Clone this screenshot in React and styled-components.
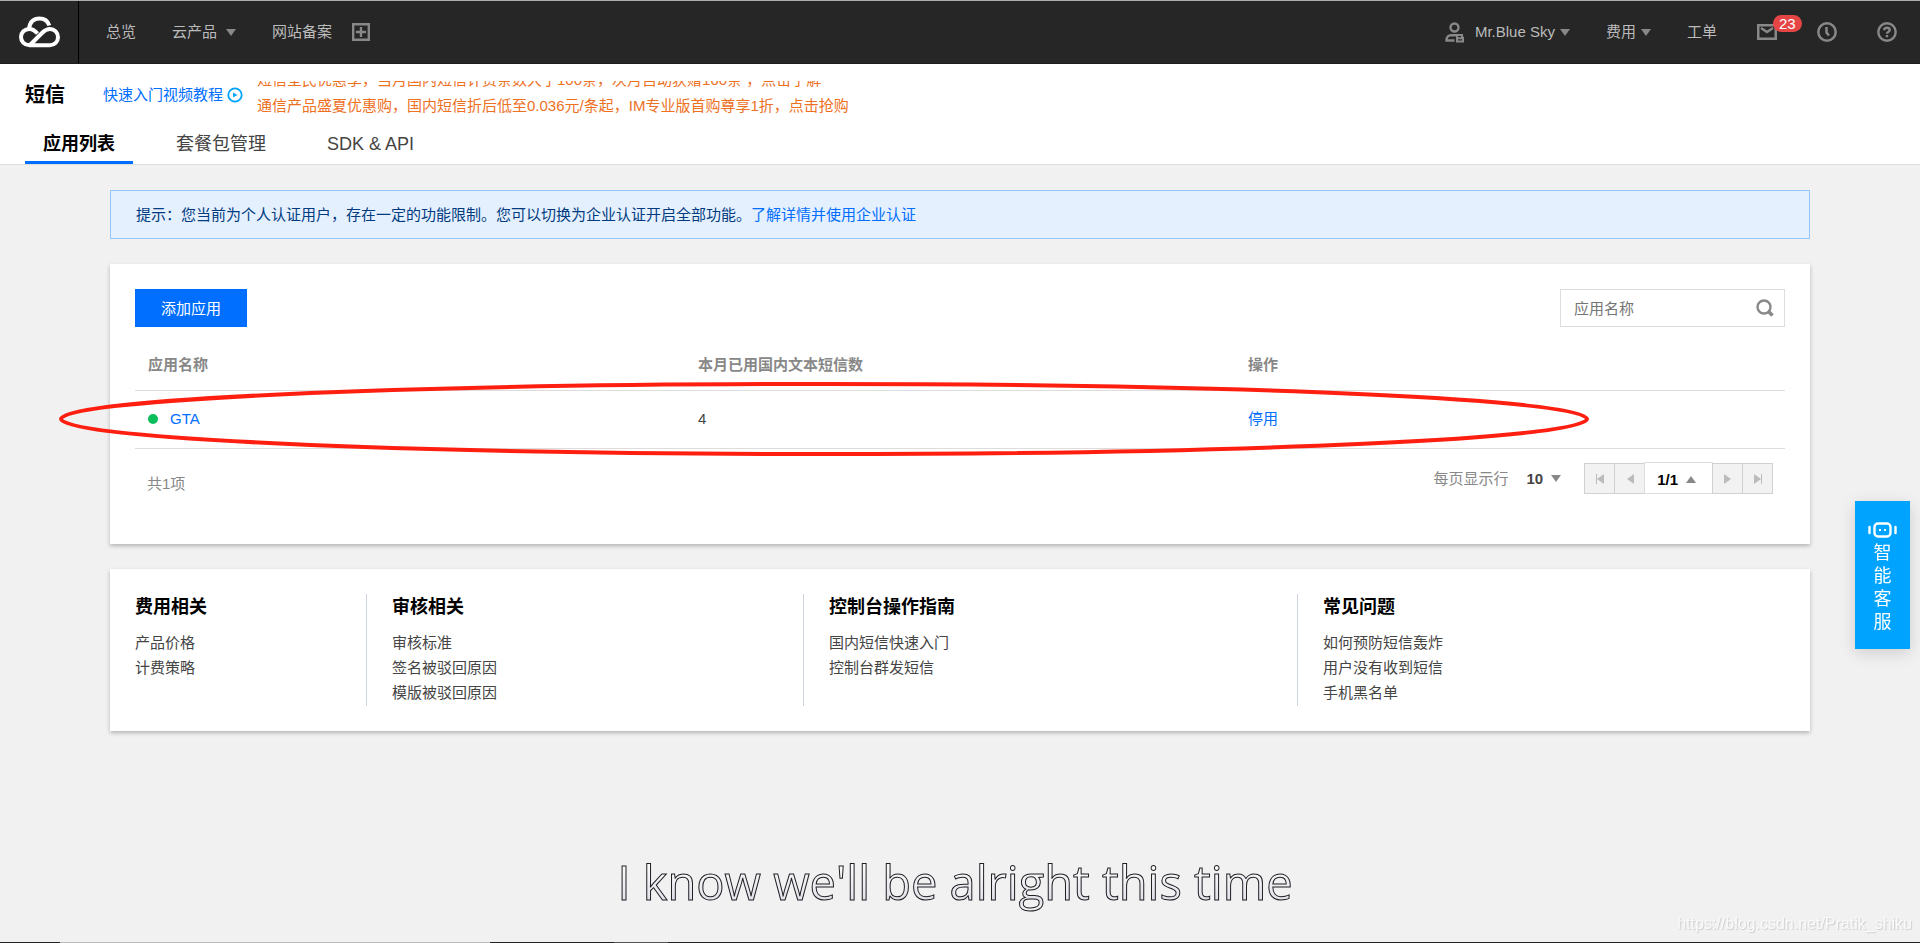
import React, { useState } from "react";
import styled, { createGlobalStyle, css } from "styled-components";

const GlobalStyle = createGlobalStyle`
  * {
    box-sizing: border-box;
  }

  body {
    margin: 0;
    background: #f1f1f1;
    color: #444;
    font-family: "Liberation Sans", "Noto Sans CJK SC", sans-serif;
    font-size: 15px;
    line-height: 24px;
  }

  button, input, select {
    font: inherit;
  }

  a {
    color: #006eff;
    text-decoration: none;
  }
`;

const Page = styled.div`
  min-height: 100vh;
`;

const Header = styled.header`
  display: flex;
  align-items: center;
  height: 64px;
  padding-right: 23px;
  border-top: 1px solid #a9aeae;
  border-bottom: 1px solid #1e1e1e;
  background: #262626;
`;

const Logo = styled.a`
  display: flex;
  align-items: center;
  justify-content: center;
  width: 79px;
  height: 100%;
  border-right: 1px solid #000;
`;

const Nav = styled.nav`
  display: flex;
  align-items: center;
  gap: ${(props) => props.$gap};
  margin-left: ${(props) => props.$push || "0"};
`;

const NavLink = styled.a`
  display: flex;
  align-items: center;
  gap: ${(props) => props.$gap || "5px"};
  color: #bbb;
`;

const IconButton = styled.button`
  position: relative;
  display: flex;
  padding: 0;
  border: 0;
  background: none;
  color: #888;
`;

const Caret = styled.i`
  border: 5px solid transparent;
  ${(props) =>
    props.$up
      ? css`
          border-top: 0;
          border-bottom: 7px solid #888;
        `
      : css`
          border-bottom: 0;
          border-top: 7px solid #888;
        `}
`;

const Badge = styled.span`
  position: absolute;
  left: 16px;
  top: -9px;
  padding: 0 6px;
  border-radius: 9px;
  background: #e54545;
  color: #fff;
  line-height: 17px;
`;

const SubHeader = styled.div`
  padding: 0 25px;
  border-bottom: 1px solid #ddd;
  background: #fff;
`;

const TitleRow = styled.div`
  display: flex;
  align-items: center;
  height: 61px;
`;

const Title = styled.h1`
  margin: 0 38px 0 0;
  color: #000;
  font-size: 20px;
`;

const VideoLink = styled.a`
  display: flex;
  align-items: center;
  gap: 4px;
  margin-right: 14px;
`;

const Ticker = styled.div`
  display: flex;
  flex-direction: column;
  align-self: flex-start;
  justify-content: flex-end;
  height: 38px;
  margin-top: 17px;
  overflow: hidden;

  a {
    color: #ed711f;
    line-height: 26px;
    flex: none;
  }
`;

const Tabs = styled.div`
  display: flex;
  gap: 25px;
`;

const Tab = styled.button`
  height: 39px;
  padding: 2px 18px 0;
  border: 0;
  border-bottom: 3px solid ${(props) => (props.$active ? "#006eff" : "transparent")};
  background: none;
  color: ${(props) => (props.$active ? "#000" : "#444")};
  font-size: 18px;
  font-weight: ${(props) => (props.$active ? 700 : 400)};
`;

const Content = styled.main`
  display: flex;
  flex-direction: column;
  gap: 25px;
  padding: 25px 110px;
`;

const Notice = styled.div`
  padding: 12px 25px 11px;
  border: 1px solid #97c7ff;
  background: #e5f0ff;
  color: #003b80;
`;

const Card = styled.section`
  padding: 25px;
  background: #fff;
  box-shadow: 0 2px 4px rgba(0, 0, 0, 0.25);
`;

const Toolbar = styled.div`
  display: flex;
  justify-content: space-between;
`;

const PrimaryButton = styled.button`
  height: 38px;
  padding: 2px 26px 0;
  border: 0;
  background: #006eff;
  color: #fff;
`;

const SearchBox = styled.label`
  display: flex;
  align-items: center;
  width: 225px;
  height: 38px;
  padding: 0 10px 0 13px;
  border: 1px solid #ddd;
  color: #888;

  input {
    flex: 1;
    min-width: 0;
    padding: 2px 0 0;
    border: 0;
    outline: 0;
    background: none;
  }

  input::placeholder {
    color: #757575;
  }
`;

const TableWrap = styled.div`
  position: relative;
`;

const Table = styled.table`
  width: 100%;
  border-collapse: separate;
  border-spacing: 0;
  table-layout: fixed;

  th, td {
    padding: 0 13px;
    border-bottom: 1px solid #ddd;
    text-align: left;
  }

  th {
    height: 64px;
    padding-top: 12px;
    color: #888;
  }

  td {
    height: 58px;
    padding-bottom: 2px;
  }
`;

const AppName = styled.span`
  display: flex;
  align-items: center;
  gap: 12px;

  &::before {
    content: "";
    width: 10px;
    height: 10px;
    border-radius: 50%;
    background: #0abf5b;
  }
`;

/* hand drawn style marker round the row */
const Marker = styled.svg`
  position: absolute;
  left: -74px;
  bottom: -5px;
  width: calc(100% - 124px);
  height: 70px;
  overflow: visible;
  pointer-events: none;
`;

const TableFooter = styled.div`
  display: flex;
  align-items: flex-start;
  justify-content: space-between;
  padding: 13px 12px 23px;
  color: #888;
`;

const Total = styled.span`
  padding-top: 10px;
`;

const Pager = styled.div`
  display: flex;
  align-items: center;
`;

const PageSize = styled.button`
  display: flex;
  align-items: center;
  gap: 8px;
  margin: 0 23px 0 18px;
  padding: 0;
  border: 0;
  background: none;
  color: #444;
  font-weight: 700;
`;

const PageButton = styled.button`
  display: flex;
  align-items: center;
  justify-content: center;
  width: 31px;
  height: 31px;
  margin-right: -1px;
  padding: 0;
  border: 1px solid #d1d1d1;
  background: #f2f2f2;
  color: #bbb;

  &:last-child {
    margin-right: 0;
  }
`;

const PageSelect = styled.button`
  display: flex;
  align-items: center;
  gap: 8px;
  height: 32px;
  margin: 0 -1px 1px 0;
  padding: 3px 16px 0 12px;
  border: 1px solid #ddd;
  background: #fff;
  color: #000;
  font-weight: 700;
`;

const HelpGrid = styled.div`
  display: grid;
  grid-template-columns: 257fr 437fr 494fr 462fr;
`;

const HelpColumn = styled.div`
  display: flex;
  flex-direction: column;
  min-height: 112px;
  padding-left: ${(props) => (props.$first ? "0" : "25px")};
  margin-left: ${(props) => (props.$first ? "0" : "-26px")};
  border-left: ${(props) => (props.$first ? "0" : "1px solid #cfd5de")};

  h3 {
    margin: 0 0 10px;
    color: #000;
    font-size: 18px;
    line-height: 26px;
  }

  a {
    color: #444;
    line-height: 25px;
  }
`;

const Support = styled.button`
  position: fixed;
  right: 10px;
  top: 501px;
  display: flex;
  flex-direction: column;
  align-items: center;
  width: 55px;
  padding: 21px 0 15px;
  border: 0;
  background: #00a4ff;
  box-shadow: 0 4px 15px rgba(0, 0, 0, 0.15);
  color: #fff;
  font-size: 18px;
  line-height: 23px;

  span {
    width: 18px;
    margin-top: 4px;
  }
`;

const Lyric = styled.p`
  position: fixed;
  left: 0;
  right: 10px;
  bottom: 25px;
  margin: 0;
  background: linear-gradient(#fff 20%, #e2e2ea 75%, #fff);
  background-clip: text;
  -webkit-text-stroke: 1px #202024;
  color: transparent;
  font-family: "Open Sans", sans-serif;
  font-size: 47px;
  line-height: 72px;
  text-align: center;
`;

const Watermark = styled.span`
  position: fixed;
  right: 8px;
  bottom: 7px;
  color: #fafafa;
  font-size: 16px;
  text-shadow: 1px 1px 1px #ccc;
`;

const BottomEdge = styled.div`
  position: fixed;
  inset: auto 0 0;
  display: flex;
  height: 1px;
  background: #222;

  &::before {
    content: "";
    width: 430px;
    margin-left: 60px;
    background: #bbb;
  }

  &::after {
    content: "";
    width: 54px;
    margin-left: 124px;
    background: #555;
  }
`;

const CloudIcon = () => (
  <svg width="41" height="32" viewBox="0 0 41 32" fill="none" stroke="#fff" strokeWidth="4">
    <path d="M10 12.5C11 5.5 15 2.5 20.5 2.5c5 0 8.500 3 9.800 7" />
    <path d="M18.500 17.500c-2.500-2.800-5-4.500-8-4.500C5.500 13 2 16.500 2 21c0 4.700 3.500 8.200 8.500 8.200h20.500c4.500 0 8-3.500 8-8 0-4.700-3.500-8.200-8-8.200-3.500 0-5.500 1.500-8 4L11.500 28.500" />
  </svg>
);

const PlusIcon = () => (
  <svg width="18" height="18" viewBox="0 0 18 18" fill="none" stroke="currentColor" strokeWidth="2.400">
    <path d="M1.200 1.200h15.600v15.600H1.200zM4 9h10M9 4v10" />
  </svg>
);

const UserIcon = () => (
  <svg width="20" height="21" viewBox="0 0 20 21" fill="none" stroke="#888" strokeWidth="2.4">
    <circle cx="9.500" cy="5.500" r="4" />
    <path d="M9.500 18.500H1.500c0-3.500 1.800-5.300 4.500-5.300h5" />
    <path d="M12 13h5v2.800h1v3.700h-6zM12 16.200h5" strokeWidth="2" />
  </svg>
);

const MailIcon = () => (
  <svg width="20" height="16" viewBox="0 0 20 16" fill="none" stroke="currentColor" strokeWidth="2.500">
    <path d="M1.250 1.250h17.500v13.500H1.250zM4 4l6 4 6-4" />
  </svg>
);

const ClockIcon = () => (
  <svg width="20" height="20" viewBox="0 0 20 20" fill="none" stroke="currentColor" strokeWidth="2.500">
    <circle cx="10" cy="10" r="8.700" />
    <path d="M9.500 5v5.500l2.500 3" />
  </svg>
);

const HelpIcon = () => (
  <svg width="20" height="20" viewBox="0 0 20 20" fill="none" stroke="currentColor" strokeWidth="2.400">
    <circle cx="10" cy="10" r="8.700" />
    <path d="M7.200 8.200c0-1.700 1.200-2.500 2.800-2.500s2.700.8 2.700 2.200c0 1.800-2.700 1.800-2.700 3.900M10 13v2.200" />
  </svg>
);

const PlayIcon = () => (
  <svg width="16" height="16" viewBox="0 0 16 16">
    <circle cx="8" cy="8" r="6.700" fill="none" stroke="#00a4ff" strokeWidth="1.800" />
    <path d="M6 5.500l4.500 2.500L6 10.500z" fill="#00a4ff" />
  </svg>
);

const SearchIcon = () => (
  <svg width="18" height="18" viewBox="0 0 18 18" fill="none" stroke="currentColor">
    <circle cx="8" cy="8" r="6.500" strokeWidth="2.400" />
    <path d="M12.500 12.500l4 4" strokeWidth="3.500" />
  </svg>
);

const RobotIcon = () => (
  <svg width="29" height="16" viewBox="0 0 29 16" fill="none" stroke="#fff" strokeWidth="2.400">
    <rect x="6.500" y="1.500" width="16" height="13" rx="3.500" />
    <path d="M1.500 5v6M27.500 5v6" strokeLinecap="round" />
    <path d="M11 8h2M16 8h2" strokeWidth="2" />
  </svg>
);

const PageArrow = ({ flip, end }) => (
  <svg width="10" height="12" viewBox="0 0 10 12" fill="currentColor">
    <g transform={flip ? "matrix(-1 0 0 1 10 0)" : undefined}>
      <path d="M9 1v10L2 6z" />
      {end && <path d="M1 1h1v10H1z" />}
    </g>
  </svg>
);

const tabs = ["应用列表", "套餐包管理", "SDK & API"];

const help = [
  { title: "费用相关", items: ["产品价格", "计费策略"] },
  { title: "审核相关", items: ["审核标准", "签名被驳回原因", "模版被驳回原因"] },
  { title: "控制台操作指南", items: ["国内短信快速入门", "控制台群发短信"] },
  { title: "常见问题", items: ["如何预防短信轰炸", "用户没有收到短信", "手机黑名单"] },
];

const App = () => {
  const [tab, setTab] = useState(0);
  const [search, setSearch] = useState("");

  return (
    <Page>
      <GlobalStyle />
      <Header>
        <Logo href="#" aria-label="Home">
          <CloudIcon />
        </Logo>
        <Nav $gap="36px" $push="27px">
          <NavLink href="#">总览</NavLink>
          <NavLink href="#" $gap="9px">
            云产品
            <Caret />
          </NavLink>
          <NavLink href="#">网站备案</NavLink>
        </Nav>
        <Nav $push="20px">
          <IconButton aria-label="Add">
            <PlusIcon />
          </IconButton>
        </Nav>
        <Nav $gap="36px" $push="auto">
          <NavLink href="#">
            <NavLink as="span" $gap="10px">
              <UserIcon />
              <span>Mr.Blue Sky</span>
            </NavLink>
            <Caret />
          </NavLink>
          <NavLink href="#">
            费用
            <Caret />
          </NavLink>
          <NavLink href="#">工单</NavLink>
        </Nav>
        <Nav $gap="40px" $push="40px">
          <IconButton aria-label="Messages">
            <MailIcon />
            <Badge>23</Badge>
          </IconButton>
          <IconButton aria-label="History">
            <ClockIcon />
          </IconButton>
          <IconButton aria-label="Help">
            <HelpIcon />
          </IconButton>
        </Nav>
      </Header>

      <SubHeader>
        <TitleRow>
          <Title>短信</Title>
          <VideoLink href="#">
            快速入门视频教程
            <PlayIcon />
          </VideoLink>
          <Ticker>
            <a href="#">短信全民优惠季，当月国内短信计费条数大于100条，次月自动获赠100条 ，点击了解</a>
            <a href="#">通信产品盛夏优惠购，国内短信折后低至0.036元/条起，IM专业版首购尊享1折，点击抢购</a>
          </Ticker>
        </TitleRow>
        <Tabs role="tablist">
          {tabs.map((name, i) => (
            <Tab key={name} role="tab" aria-selected={tab === i} $active={tab === i} onClick={() => setTab(i)}>
              {name}
            </Tab>
          ))}
        </Tabs>
      </SubHeader>

      <Content>
        <Notice>
          提示：您当前为个人认证用户，存在一定的功能限制。您可以切换为企业认证开启全部功能。
          <a href="#">了解详情并使用企业认证</a>
        </Notice>

        <Card>
          <Toolbar>
            <PrimaryButton>添加应用</PrimaryButton>
            <SearchBox>
              <input
                aria-label="应用名称"
                placeholder="应用名称"
                value={search}
                onChange={(e) => setSearch(e.target.value)}
              />
              <SearchIcon />
            </SearchBox>
          </Toolbar>
          <TableWrap>
            <Table>
              <thead>
                <tr>
                  <th>应用名称</th>
                  <th>本月已用国内文本短信数</th>
                  <th>操作</th>
                </tr>
              </thead>
              <tbody>
                <tr>
                  <td>
                    <AppName>
                      <a href="#">GTA</a>
                    </AppName>
                  </td>
                  <td>4</td>
                  <td>
                    <a href="#">停用</a>
                  </td>
                </tr>
              </tbody>
            </Table>
            <Marker>
              <ellipse cx="50%" cy="50%" rx="50%" ry="50%" fill="none" stroke="#ff1f10" strokeWidth="4" />
            </Marker>
          </TableWrap>
          <TableFooter>
            <Total>共1项</Total>
            <Pager>
              <span>每页显示行</span>
              <PageSize>
                10
                <Caret />
              </PageSize>
              <PageButton aria-label="First page">
                <PageArrow end />
              </PageButton>
              <PageButton aria-label="Previous page">
                <PageArrow />
              </PageButton>
              <PageSelect>
                1/1
                <Caret $up />
              </PageSelect>
              <PageButton aria-label="Next page">
                <PageArrow flip />
              </PageButton>
              <PageButton aria-label="Last page">
                <PageArrow flip end />
              </PageButton>
            </Pager>
          </TableFooter>
        </Card>

        <Card>
          <HelpGrid>
            {help.map((group, i) => (
              <HelpColumn key={group.title} $first={i === 0}>
                <h3>{group.title}</h3>
                {group.items.map((item) => (
                  <a href="#" key={item}>
                    {item}
                  </a>
                ))}
              </HelpColumn>
            ))}
          </HelpGrid>
        </Card>
      </Content>

      <Support>
        <RobotIcon />
        <span>智能客服</span>
      </Support>
      <Lyric>I know we'll be alright this time</Lyric>
      <Watermark>https://blog.csdn.net/Pratik_shiku</Watermark>
      <BottomEdge />
    </Page>
  );
};

export default App;
